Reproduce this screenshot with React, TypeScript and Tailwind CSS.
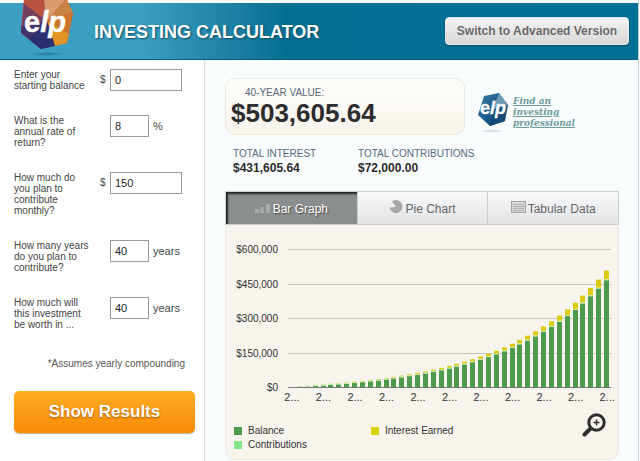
import { useState } from 'react'

const RATE = 0.08
const YEARS = 40
const YEARLY = 1800

const fields = [
  { id: 'balance', label: 'Enter your starting balance', prefix: '$', suffix: '', value: '0', wide: true },
  { id: 'rate', label: 'What is the annual rate of return?', prefix: '', suffix: '%', value: '8', wide: false },
  { id: 'monthly', label: 'How much do you plan to contribute monthly?', prefix: '$', suffix: '', value: '150', wide: true },
  { id: 'years', label: 'How many years do you plan to contribute?', prefix: '', suffix: 'years', value: '40', wide: false },
  { id: 'worth', label: 'How much will this investment be worth in ...', prefix: '', suffix: 'years', value: '40', wide: false },
]

const legend = [
  { label: 'Balance', color: 'bg-[#4c9a4c]' },
  { label: 'Interest Earned', color: 'bg-[#dfd000]' },
  { label: 'Contributions', color: 'bg-[#84e584]' },
]

function buildSeries() {
  const rows = [{ balance: 0, contributions: 0, interest: 0 }]
  let total = 0
  for (let i = 1; i <= YEARS; i++) {
    const interest = (total + YEARLY) * RATE
    rows.push({ balance: total, contributions: YEARLY, interest })
    total += YEARLY + interest
  }
  return rows
}

function HeaderLogo() {
  return (
    <svg viewBox="0 0 54 58" className="h-[58px] w-[54px] shrink-0" aria-label="elp">
      <defs>
        <radialGradient id="logoShadow">
          <stop offset="0" stopColor="#1b6f8c" stopOpacity="0.8" />
          <stop offset="1" stopColor="#1b6f8c" stopOpacity="0" />
        </radialGradient>
      </defs>
      <ellipse cx="27" cy="54" rx="17" ry="2" fill="url(#logoShadow)" />
      <path d="M4 0H47L53 13L47 43L21 49L1 33Z" fill="#a14a4c" />
      <path d="M4 0H24L27 21L1 30Z" fill="#b9533f" />
      <path d="M24 0H45L27 21Z" fill="#dc9a70" />
      <path d="M45 0H47L53 13L27 21Z" fill="#c98243" />
      <path d="M53 13L49 34L27 21Z" fill="#c9762f" />
      <path d="M49 34L47 43L35 46L27 21Z" fill="#e09526" />
      <path d="M4 4L27 21L1 33Z" fill="#71405f" />
      <path d="M1 26L27 21L21 49L1 33Z" fill="#45336b" />
      <path d="M27 21L35 46L21 49L9 39Z" fill="#2b2f6f" />
      <text x="4" y="32" fill="#fff" stroke="#fff" strokeWidth="0.4" fontFamily="Liberation Sans, sans-serif" fontSize="29" fontWeight="700">
        e<tspan fontStyle="italic">lp</tspan>
      </text>
    </svg>
  )
}

function SmallLogo() {
  return (
    <svg viewBox="0 0 34 42" className="h-[42px] w-[34px] shrink-0" aria-label="elp">
      <defs>
        <linearGradient id="smallLogo" x1="0" y1="0" x2="1" y2="1">
          <stop offset="0" stopColor="#3f7ba3" />
          <stop offset="0.5" stopColor="#1c5c8b" />
          <stop offset="1" stopColor="#0b3a62" />
        </linearGradient>
      </defs>
      <ellipse cx="15" cy="39" rx="9" ry="1.5" fill="#dde2e6" />
      <path d="M7 4L22 1L31 13L28 29L13 34L1 23Z" fill="url(#smallLogo)" />
      <path d="M22 1L31 13L16 17Z" fill="#6d99b8" />
      <path d="M16 17L28 29L13 34Z" fill="#10497a" />
      <text x="3" y="22" fill="#fff" stroke="#fff" strokeWidth="0.3" fontFamily="Liberation Sans, sans-serif" fontSize="18" fontWeight="700">
        e<tspan fontStyle="italic">lp</tspan>
      </text>
    </svg>
  )
}

function BarIcon() {
  return (
    <svg viewBox="0 0 16 10" className="h-[10px] w-4" fill="#a9abab">
      <rect x="0" y="5" width="4" height="4" />
      <rect x="5" y="3" width="4" height="6" />
      <rect x="11" y="0" width="4" height="9" />
    </svg>
  )
}

function PieIcon() {
  return (
    <svg viewBox="0 0 14 14" className="mb-1 h-[14px] w-[14px]">
      <path d="M7 7L3 1.5A6.5 6.5 0 1 1 .6 7.6Z" fill="#a9a9ab" />
    </svg>
  )
}

function TableIcon() {
  return (
    <svg viewBox="0 0 15 12" className="mb-1 h-3 w-[15px]">
      <rect x="0.5" y="0.5" width="14" height="11" fill="#d6d6d8" stroke="#a3a3a5" />
      <path d="M2 3.5H13M2 5.5H13M2 7.5H13M2 9.5H13" stroke="#b3b3b5" />
    </svg>
  )
}

function ZoomIcon() {
  return (
    <svg viewBox="0 0 24 24" className="h-6 w-6" fill="none" stroke="#2e2e2e">
      <circle cx="14.5" cy="9.5" r="7.7" strokeWidth="3" />
      <path d="M14.5 6.5V12.5M11.5 9.5H17.5" strokeWidth="1.5" />
      <path d="M8.5 15.5L2.5 21.5" strokeWidth="4" strokeLinecap="round" />
    </svg>
  )
}

const tabs = [
  { name: 'Bar Graph', Icon: BarIcon },
  { name: 'Pie Chart', Icon: PieIcon },
  { name: 'Tabular Data', Icon: TableIcon },
]

function BarChart() {
  const rows = buildSeries()
  const base = 148
  const height = (v: number) => (v / 600000) * 138
  const slot = 323 / rows.length

  return (
    <svg viewBox="0 0 392 170" className="w-full" fontFamily="Liberation Sans, sans-serif" fontSize="10" fill="#333">
      {[600000, 450000, 300000, 150000, 0].map(tick => {
        const y = Math.round(base - height(tick)) + 0.5
        return (
          <g key={tick}>
            <text x="52" y={y + 3} textAnchor="end">${tick.toLocaleString('en-US')}</text>
            <path d={`M62 ${y}H385`} stroke={tick ? '#c6c6c2' : '#777'} />
          </g>
        )
      })}
      {rows.map((row, i) => {
        if (!i) return null
        const x = Math.round(62 + slot * i + 1)
        const balance = height(row.balance)
        const interest = height(row.interest)
        return (
          <g key={i}>
            <rect x={x} y={base - balance} width="5" height={balance} fill="#4c9a4c" />
            <rect x={x} y={base - balance - 1} width="5" height="1" fill="#c3efb0" />
            <rect x={x} y={base - balance - 1 - interest} width="5" height={interest} fill="#dccb10" />
          </g>
        )
      })}
      {rows.map((_, i) => i % 4 === 0 && (
        <text key={i} x={66 + slot * i} y="162" fontSize="11" textAnchor="middle">2...</text>
      ))}
    </svg>
  )
}

function Field({ field }: { field: (typeof fields)[number] }) {
  const [value, setValue] = useState(field.value)

  return (
    <div className="flex items-start text-[#444]">
      <label htmlFor={field.id} className="w-[84px] pr-1.5 text-[10px] leading-[11px]">{field.label}</label>
      <span className="w-3 pl-0.5 text-[10px] leading-[22px]">{field.prefix}</span>
      <input
        id={field.id}
        value={value}
        onChange={e => setValue(e.target.value)}
        className={`h-[22px] border border-[#999] bg-white px-1 text-[11px] text-[#222] ${field.wide ? 'w-[72px]' : 'w-[39px]'}`}
      />
      <span className="pl-1 text-[11px] leading-[22px]">{field.suffix}</span>
    </div>
  )
}

export default function App() {
  const [active, setActive] = useState('Bar Graph')

  return (
    <div className="bg-white font-['Liberation_Sans',Arial,sans-serif]">
      <div className="mr-px flex min-h-screen flex-col border-r border-[#c8cfd4]">
        <header className="flex h-[60px] items-end bg-linear-to-r from-[#3a9fc0] from-22% via-[#026f93] via-45% to-[#007095] bg-clip-content pt-[3px]">
          <div className="flex h-full w-full items-center border-b border-[#075d7c] pr-[9px]">
            <div className="-mt-[3px] ml-5 flex h-[60px] items-start">
              <HeaderLogo />
            </div>
            <h1 className="ml-5 flex-1 pt-0.5 text-[18px] font-bold text-white [text-shadow:1px_1px_2px_#0a4a60]">INVESTING CALCULATOR</h1>
            <button className="h-7 w-[184px] rounded-[4px] border border-[#e9e9e9] bg-linear-to-b from-[#f3f3f3] to-[#d8d8d8] text-[12px] font-bold text-[#6a6a6a] shadow-[0_1px_2px_#064e68]">
              Switch to Advanced Version
            </button>
          </div>
        </header>

        <main className="flex flex-1 items-stretch">
          <form className="w-[205px] shrink-0 border-r border-[#dcdfe0] pt-[9px] pr-[9px] pl-3.5" onSubmit={e => e.preventDefault()}>
            <div className="flex flex-col gap-6">
              {fields.map(f => <Field key={f.id} field={f} />)}
            </div>
            <p className="mt-7 pr-2.5 text-right text-[10px] leading-3 text-[#555]">*Assumes yearly compounding</p>
            <button className="mt-[21px] h-[42px] w-full rounded-[5px] bg-linear-to-b from-[#ffae1f] to-[#f68a05] text-[17px] font-bold text-white shadow-[0_1px_1px_#b9b09c] [text-shadow:0_1px_2px_#a85c00]">
              Show Results
            </button>
          </form>

          <section className="flex-1 bg-[#f8fcfd] pt-[18px] pr-[19px] pl-5">
            <div className="flex items-center gap-3">
              <div className="h-[57px] w-[240px] rounded-[10px] border border-[#e9e8e2] bg-linear-to-b from-[#fefdf9] to-[#f7f4ec] pt-2 pl-[5px]">
                <p className="pl-3.5 text-[10px] leading-3 text-[#56697c]">40-YEAR VALUE:</p>
                <p className="text-[26px] leading-7 font-bold text-[#2d2d2d]">$503,605.64</p>
              </div>
              <div className="flex items-center pt-3">
                <SmallLogo />
                <a href="#" className="ml-0.5 w-[70px] font-['DejaVu_Serif',serif] text-[9px] leading-[11px] font-bold text-[#6f9a9c] italic underline">
                  Find an investing professional
                </a>
              </div>
            </div>

            <dl className="mt-3 flex pl-2 text-[10px] leading-[14px]">
              <div className="w-[125px]">
                <dt className="text-[#56697c]">TOTAL INTEREST</dt>
                <dd className="text-[12px] font-bold text-[#2d2d2d]">$431,605.64</dd>
              </div>
              <div>
                <dt className="text-[#56697c]">TOTAL CONTRIBUTIONS</dt>
                <dd className="text-[12px] font-bold text-[#2d2d2d]">$72,000.00</dd>
              </div>
            </dl>

            <div className="mt-4 grid h-[34px] grid-cols-3 border border-[#ccd0d2]">
              {tabs.map(({ name, Icon }) => (
                <button
                  key={name}
                  onClick={() => setActive(name)}
                  className={`flex items-center justify-center gap-0.5 pt-0.5 text-[12px] ${
                    active === name
                      ? 'bg-[#8b8e8e] text-white shadow-[inset_2px_2px_2px_#222] [text-shadow:1px_1px_1px_#444]'
                      : 'border-l border-[#ccd0d2] bg-linear-to-b from-[#f8f9fa] to-[#e2e3e5] text-[#666]'
                  }`}
                >
                  <Icon />
                  {name}
                </button>
              ))}
            </div>

            <div className="rounded-b-[10px] border border-t-0 border-[#ecebe5] bg-[#f6f4ec] pt-[14px] pb-2">
              <BarChart />
              <div className="flex items-start justify-between pt-1 pr-3 pl-2">
                <ul className="grid grid-cols-[137px_auto] gap-y-0.5 pt-3 text-[10px] leading-3 text-[#333]">
                  {legend.map(l => (
                    <li key={l.label} className="flex items-center gap-1.5">
                      <span className={`h-2 w-2 ${l.color}`} />
                      {l.label}
                    </li>
                  ))}
                </ul>
                <button aria-label="Zoom in">
                  <ZoomIcon />
                </button>
              </div>
            </div>
          </section>
        </main>
      </div>
    </div>
  )
}
